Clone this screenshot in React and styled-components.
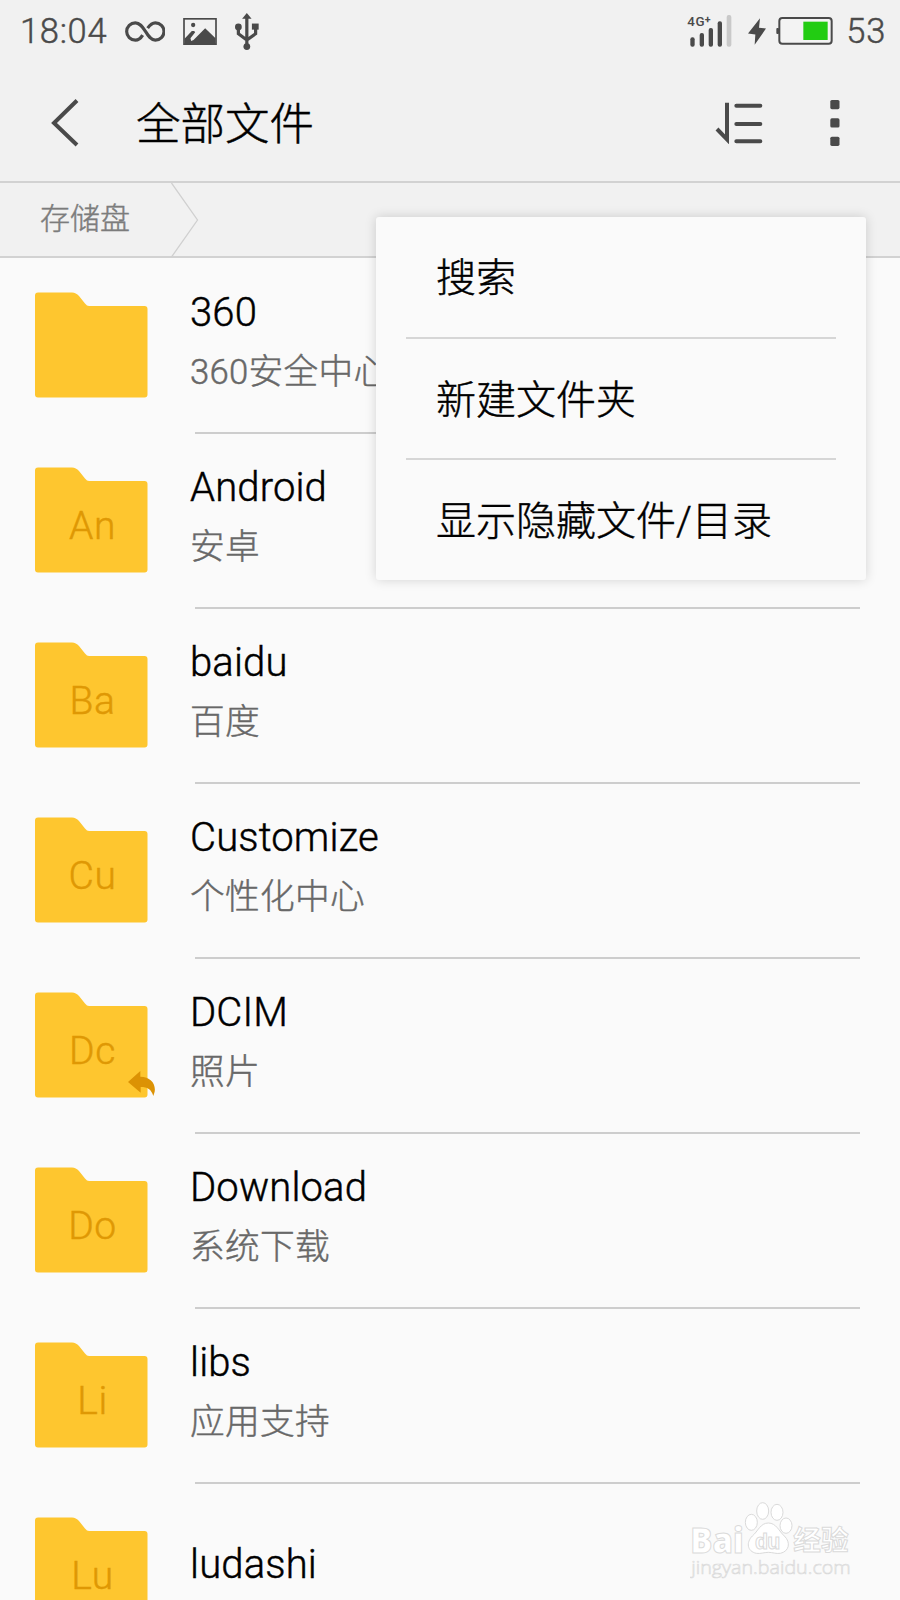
import styled, { createGlobalStyle } from "styled-components";

const folders = [
  { name: "360", note: "360安全中心", short: "" },
  { name: "Android", note: "安卓", short: "An" },
  { name: "baidu", note: "百度", short: "Ba" },
  { name: "Customize", note: "个性化中心", short: "Cu" },
  { name: "DCIM", note: "照片", short: "Dc", shortcut: true },
  { name: "Download", note: "系统下载", short: "Do" },
  { name: "libs", note: "应用支持", short: "Li" },
  { name: "ludashi", note: "", short: "Lu" },
];

const menuItems = ["搜索", "新建文件夹", "显示隐藏文件/目录"];

function InfinityIcon() {
  return (
    <svg width="40" height="21" viewBox="0 0 120 62" fill="none" stroke="#4a4a4a" strokeWidth="9.5">
      <path d="M53 42C47 52 40 57 31 57A26 26 0 0 1 31 5C46 5 53 18 61 30C69 43 77 57 91 57A26 26 0 0 0 91 5C81 5 74 12 68 21" />
    </svg>
  );
}

function PictureIcon() {
  return (
    <svg width="34" height="27" viewBox="0 0 101 81">
      <rect x="2.5" y="2.5" width="96" height="76" fill="none" stroke="#4a4a4a" strokeWidth="5" />
      <circle cx="30" cy="21" r="6.5" fill="#4a4a4a" />
      <path d="M4 62L26 39H33L36 43L22 61L24 69L31 66L66 31L97 61V78H4Z" fill="#4a4a4a" />
    </svg>
  );
}

function UsbIcon() {
  return (
    <svg width="24" height="37" viewBox="0 0 71 109" fill="#4a4a4a">
      <path d="M35 0L49 17H21Z" />
      <circle cx="10" cy="41" r="10" />
      <rect x="50" y="31" width="20" height="18" />
      <circle cx="35" cy="99" r="10" />
      <path d="M35 12V95M10 41V61L35 80L61 61V45" fill="none" stroke="#4a4a4a" strokeWidth="9.5" />
    </svg>
  );
}

function SignalIcon() {
  return (
    <svg width="45" height="32" viewBox="0 0 135 96" fill="#4a4a4a" overflow="visible">
      <text x="1" y="34" fontFamily="Roboto" fontWeight="500" fontSize="40" textLength="52">4G</text>
      <text x="53" y="25" fontFamily="Roboto" fontWeight="700" fontSize="32">+</text>
      <rect x="10" y="67" width="13" height="28" rx="6" />
      <rect x="38" y="54" width="13" height="41" rx="6" />
      <rect x="65" y="39" width="13" height="56" rx="6" />
      <rect x="92" y="19" width="13" height="76" rx="6" />
      <rect x="119" y="0" width="14" height="95" rx="6" fill="#c9c9c9" />
    </svg>
  );
}

function BoltIcon() {
  return (
    <svg width="18" height="27" viewBox="0 0 54 80" fill="#4a4a4a">
      <path d="M36 0L0 46L22 49L20 80L54 31L33 29Z" />
    </svg>
  );
}

function BatteryIcon() {
  return (
    <svg width="57" height="28" viewBox="0 0 171 84">
      <rect x="1" y="33" width="8" height="18" rx="3" fill="#4a4a4a" />
      <rect x="10" y="3" width="157" height="77" rx="9" fill="#f3f3f3" stroke="#4a4a4a" strokeWidth="6" />
      <rect x="82" y="14" width="73" height="55" fill="#22cc12" />
    </svg>
  );
}

function BackIcon() {
  return (
    <svg width="28" height="48" viewBox="0 0 28 48" fill="none" stroke="#4a4a4a" strokeWidth="4">
      <path d="M26 1.5L3 24L26 46" />
    </svg>
  );
}

function SortIcon() {
  return (
    <svg width="48" height="42" viewBox="0 0 144 126" fill="none" stroke="#4a4a4a">
      <path d="M36 2V112L6 81" strokeWidth="12" />
      <path d="M64 11H136M64 66H136M64 118H136" strokeWidth="12" strokeLinecap="round" />
    </svg>
  );
}

function MoreIcon() {
  return (
    <svg width="10" height="46" viewBox="0 0 10 46" fill="#4a4a4a">
      <rect x="0.3" y="0" width="9.2" height="9.2" rx="1.6" />
      <rect x="0.3" y="18.3" width="9.2" height="9.2" rx="1.6" />
      <rect x="0.3" y="36.7" width="9.2" height="9.2" rx="1.6" />
    </svg>
  );
}

function CrumbArrow() {
  return (
    <svg width="28" height="74" viewBox="0 0 28 74" fill="none" stroke="#d0d0d0" strokeWidth="1.3">
      <path d="M0.5 0L26.5 37L0.5 74" />
    </svg>
  );
}

function FolderShape() {
  return (
    <svg width="113" height="106" viewBox="0 0 113 106">
      <path
        d="M3 0.5H37Q41 0.5 44 4L50 11.5Q52 14 54 14H109.5Q112.5 14 112.5 17V102.5Q112.5 105.5 109.5 105.5H3Q0 105.5 0 102.5V3.5Q0 0.5 3 0.5Z"
        fill="#fec62f"
      />
    </svg>
  );
}

function ShortcutArrow() {
  return (
    <svg width="27" height="25" viewBox="0 0 81 75">
      <path d="M0 33L37 0V17C67 17 84 38 80 62L76 75C69 54 59 48 38 48V65Z" fill="#dc9204" />
    </svg>
  );
}

function PawLogo() {
  return (
    <svg width="164" height="80" viewBox="0 0 492 240" fill="#fff" stroke="#dadada" strokeWidth="3">
      <text x="1" y="155" fontFamily="'Open Sans', sans-serif" fontWeight="800" fontSize="104" textLength="160" lengthAdjust="spacingAndGlyphs">
        Bai
      </text>
      <ellipse cx="184" cy="64" rx="18" ry="24" />
      <ellipse cx="218" cy="30" rx="18" ry="25" />
      <ellipse cx="261" cy="34" rx="18" ry="24" />
      <ellipse cx="288" cy="74" rx="18" ry="23" />
      <path d="M235 66C259 66 267 91 283 105C303 124 298 151 271 157C258 159 248 154 235 154C222 154 212 159 199 157C171 151 168 124 187 105C204 91 211 66 235 66Z" />
      <text x="195" y="144" fontFamily="'Liberation Sans', sans-serif" fontWeight="700" fontSize="64" textLength="76">du</text>
      <text x="310" y="148" fontFamily="'Noto Sans CJK SC', sans-serif" fontWeight="700" fontSize="83" textLength="166">经验</text>
      <text x="4" y="219" fontFamily="'Open Sans', sans-serif" fontSize="56" strokeWidth="2" textLength="478" lengthAdjust="spacingAndGlyphs">
        jingyan.baidu.com
      </text>
    </svg>
  );
}

export default function App() {
  return (
    <>
      <GlobalStyle />
      <Screen>
        <StatusBar>
          <StatusGroup>
            <StatusText>18:04</StatusText>
            <InfinityIcon />
            <PictureIcon />
            <UsbIcon />
          </StatusGroup>
          <PowerGroup>
            <SignalIcon />
            <BoltIcon />
            <BatteryIcon />
            <StatusText>53</StatusText>
          </PowerGroup>
        </StatusBar>
        <Header>
          <BackIcon />
          <Title>全部文件</Title>
          <SortIcon />
          <MoreIcon />
        </Header>
        <Breadcrumb>
          <Crumb>存储盘</Crumb>
          <CrumbArrow />
        </Breadcrumb>
        <FolderList>
          {folders.map((folder) => (
            <FolderRow key={folder.name}>
              <FolderIcon>
                <FolderShape />
                <FolderLetters>{folder.short}</FolderLetters>
                {folder.shortcut && (
                  <ShortcutBadge>
                    <ShortcutArrow />
                  </ShortcutBadge>
                )}
              </FolderIcon>
              <FolderInfo $single={!folder.note}>
                <FolderName>{folder.name}</FolderName>
                {folder.note && <FolderNote>{folder.note}</FolderNote>}
              </FolderInfo>
            </FolderRow>
          ))}
        </FolderList>
        <Menu>
          {menuItems.map((item) => (
            <MenuItem key={item}>{item}</MenuItem>
          ))}
        </Menu>
        <Watermark>
          <PawLogo />
        </Watermark>
      </Screen>
    </>
  );
}

const GlobalStyle = createGlobalStyle`
  * {
    box-sizing: border-box;
  }
  body {
    margin: 0;
  }
  svg {
    display: block;
    flex-shrink: 0;
  }
`;

const Screen = styled.div`
  position: relative;
  width: 900px;
  height: 1600px;
  overflow: hidden;
  background: #fafafa;
  color: #000;
  font-family: Roboto, "Noto Sans CJK SC", sans-serif;
  font-weight: 300;
  -webkit-text-stroke-width: 0.45px;
`;

const StatusBar = styled.div`
  display: flex;
  justify-content: space-between;
  height: 62px;
  padding: 0 14px 0 20px;
  background: #f1f1f1;
`;

const StatusGroup = styled.div`
  display: flex;
  align-items: center;
  gap: 18px;
`;

const PowerGroup = styled(StatusGroup)`
  gap: 0;
  > :nth-child(1) {
    margin-right: 16px;
  }
  > :nth-child(2) {
    margin-right: 10px;
  }
  > :nth-child(3) {
    margin-right: 13px;
  }
`;

const StatusText = styled.span`
  font-size: 34.5px;
  letter-spacing: 0.7px;
  line-height: 62px;
  color: #4a4a4a;
`;

const Header = styled.div`
  display: flex;
  align-items: center;
  height: 121px;
  padding: 2px 60px 0 51px;
  background: #f1f1f1;
  border-bottom: 2px solid #d2d2d2;
  > :nth-child(3) {
    margin-right: 67px;
  }
`;

const Title = styled.h1`
  flex: 1;
  margin: 4px 0 0 57px;
  font-size: 44.5px;
  font-weight: 300;
  line-height: 60px;
`;

const Breadcrumb = styled.div`
  display: flex;
  align-items: center;
  height: 75px;
  background: #f1f1f1;
  border-bottom: 2px solid #d2d2d2;
`;

const Crumb = styled.span`
  width: 171px;
  padding: 0 0 2px 40px;
  font-size: 30px;
  line-height: 40px;
  color: #7c7c7c;
`;

const FolderList = styled.div`
  display: flex;
  flex-direction: column;
`;

const FolderRow = styled.div`
  display: flex;
  height: 175px;
  padding: 34px 40px 0 35px;
`;

const FolderIcon = styled.div`
  position: relative;
  width: 113px;
  height: 106px;
`;

const FolderLetters = styled.span`
  position: absolute;
  inset: 36px -1px auto 1px;
  font-size: 39px;
  line-height: 46px;
  letter-spacing: 0.6px;
  text-align: center;
  color: #df9804;
`;

const ShortcutBadge = styled.div`
  position: absolute;
  left: 93px;
  top: 79px;
`;

const FolderInfo = styled.div`
  flex: 1;
  height: 142px;
  margin-left: 47px;
  padding-top: ${(props) => (props.$single ? "28px" : "1px")};
  border-bottom: 2px solid #cdcdcd;
`;

const FolderName = styled.div`
  margin: -4px 0 0 -5px;
  font-size: 40px;
  line-height: 48px;
  letter-spacing: 0.15px;
`;

const FolderNote = styled.div`
  margin: 9px 0 0 -5px;
  font-size: 34.7px;
  line-height: 52px;
  letter-spacing: 0.3px;
  color: #686868;
`;

const Menu = styled.div`
  position: absolute;
  left: 376px;
  top: 217px;
  width: 490px;
  height: 363px;
  padding: 0 30px;
  border-radius: 3px;
  background: #fafafa;
  box-shadow: 0 0 12px rgba(0, 0, 0, 0.16);
`;

const MenuItem = styled.div`
  height: 120px;
  padding-left: 30px;
  font-size: 40px;
  line-height: 123px;
  & + & {
    height: 121px;
    border-top: 2px solid #d6d6d6;
  }
`;

const Watermark = styled.div`
  position: absolute;
  left: 690px;
  top: 1501px;
`;
